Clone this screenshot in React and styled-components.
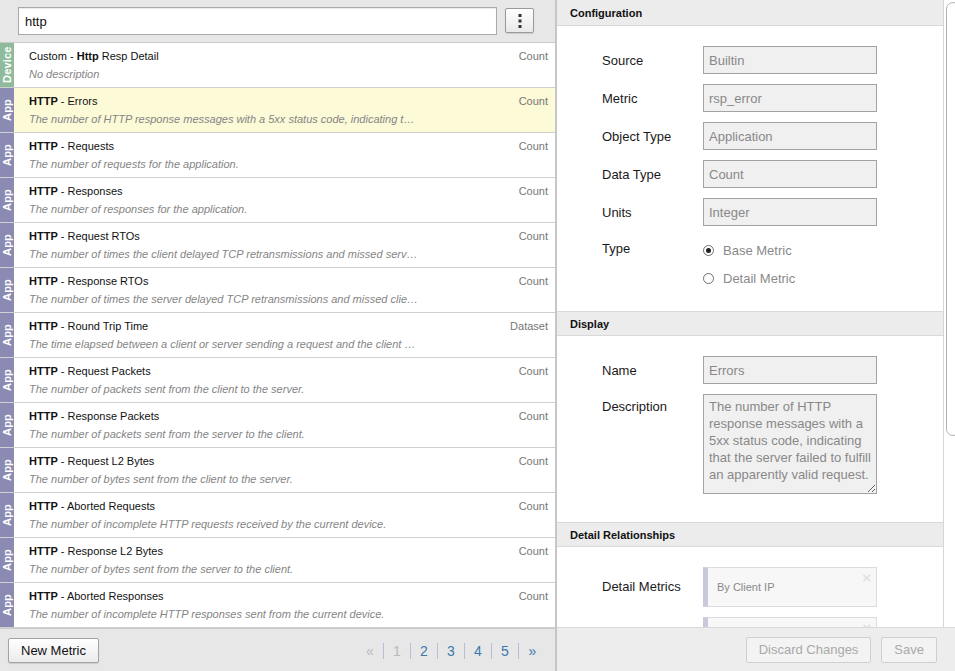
import React from 'react';
import styled, { createGlobalStyle } from 'styled-components';

const GlobalStyle = createGlobalStyle`
  html, body {
    margin: 0;
    padding: 0;
    height: 100%;
  }
  body {
    font-family: "Liberation Sans", Arial, sans-serif;
    color: #222;
    overflow: hidden;
  }
  * {
    box-sizing: border-box;
  }
`;

const Page = styled.div`
  display: flex;
  width: 955px;
  height: 671px;
  overflow: hidden;
  background: #fff;
`;

/* ---------- left side ---------- */

const LeftPane = styled.div`
  width: 557px;
  flex-shrink: 0;
  display: flex;
  flex-direction: column;
  border-right: 2px solid #c6c6c6;
`;

const SearchBar = styled.div`
  height: 43px;
  display: flex;
  align-items: flex-start;
  gap: 8px;
  padding: 7px 0 0 18px;
  background: #e7e7e7;
  border-bottom: 1px solid #c9c9c9;
`;

const SearchInput = styled.input`
  width: 479px;
  height: 28px;
  padding: 0 6px;
  border: 1px solid #a9a9a9;
  box-shadow: inset 0 1px 1px rgba(0, 0, 0, 0.08);
  font-family: inherit;
  font-size: 13px;
  color: #111;
  outline: none;
`;

const MenuButton = styled.button`
  width: 29px;
  height: 25px;
  margin-top: 1px;
  display: flex;
  align-items: center;
  justify-content: center;
  padding: 0;
  border: 1px solid #9a9a9a;
  border-radius: 2px;
  background: linear-gradient(#ffffff, #e9e9e9);
  box-shadow: 0 1px 1px rgba(0, 0, 0, 0.12);
`;

const List = styled.div`
  flex: 1;
  overflow: hidden;
  background: #fff;
`;

const Row = styled.div`
  display: flex;
  height: 45px;
  border-bottom: 1px solid #d0d0d0;
  background: ${(p) => (p.$active ? '#fcfad7' : '#fff')};
`;

const Tag = styled.div`
  width: 14px;
  flex-shrink: 0;
  display: flex;
  align-items: center;
  justify-content: center;
  background: ${(p) => (p.$kind === 'Device' ? '#8fbb9c' : '#8a8ab3')};
  color: #fff;
  font-size: 11px;
  font-weight: bold;
  writing-mode: vertical-rl;
  transform: rotate(180deg);
  letter-spacing: 0.2px;
`;

const RowBody = styled.div`
  flex: 1;
  min-width: 0;
  padding: 4px 7px 0 15px;
`;

const TitleLine = styled.div`
  display: flex;
  justify-content: space-between;
  font-size: 11px;
  line-height: 18px;
`;

const Title = styled.span`
  color: #111;
  b {
    font-weight: bold;
  }
`;

const Kind = styled.span`
  color: #777;
`;

const Desc = styled.div`
  max-width: 390px;
  font-size: 11px;
  line-height: 18px;
  font-style: italic;
  color: #858585;
  white-space: nowrap;
  overflow: hidden;
  text-overflow: ellipsis;
`;

const LeftFooter = styled.div`
  height: 43px;
  flex-shrink: 0;
  display: flex;
  align-items: center;
  justify-content: space-between;
  padding: 0 9px 0 8px;
  background: #e7e7e7;
  border-top: 1px solid #c9c9c9;
`;

const Button = styled.button`
  height: ${(p) => (p.$tall ? '26px' : '25px')};
  padding: 0 12px;
  font-family: inherit;
  font-size: 13px;
  color: ${(p) => (p.disabled ? '#a9a9a9' : '#111')};
  border: 1px solid ${(p) => (p.disabled ? '#cfcfcf' : '#a3a3a3')};
  border-radius: 2px;
  background: ${(p) => (p.disabled ? '#f3f3f3' : 'linear-gradient(#ffffff, #ebebeb)')};
  box-shadow: ${(p) => (p.disabled ? 'none' : '0 1px 1px rgba(0,0,0,0.12)')};
`;

const Pager = styled.div`
  display: flex;
  align-items: center;
  margin-top: 1px;
`;

const PageItem = styled.span`
  width: 27px;
  height: 16px;
  display: flex;
  align-items: center;
  justify-content: center;
  font-size: 14px;
  color: ${(p) => (p.$off ? '#b9b9b9' : '#3c78ad')};
  border-right: ${(p) => (p.$last ? 'none' : '1px solid #bbbad8')};
`;

/* ---------- right side ---------- */

const RightPane = styled.div`
  flex: 1;
  display: flex;
  flex-direction: column;
  min-width: 0;
`;

const ScrollArea = styled.div`
  flex: 1;
  display: flex;
  overflow: hidden;
`;

const Content = styled.div`
  flex: 1;
  border-right: 1px solid #d6d6d6;
`;

const Track = styled.div`
  width: 11px;
  flex-shrink: 0;
  overflow: hidden;
  padding: 2px 0 0 2px;
`;

const Thumb = styled.div`
  width: 14px;
  height: 434px;
  border: 1px solid #b3b3b3;
  border-radius: 7px;
  background: #fff;
`;

const SectionHead = styled.div`
  height: ${(p) => (p.$first ? '26px' : '25px')};
  display: flex;
  align-items: center;
  padding: ${(p) => (p.$first ? '1px 0 0 13px' : '0 0 0 13px')};
  background: #ececec;
  border-top: ${(p) => (p.$first ? 'none' : '1px solid #d9d9d9')};
  border-bottom: 1px solid #d9d9d9;
  font-size: 11px;
  font-weight: bold;
  color: #111;
`;

const Form = styled.div`
  display: flex;
  flex-direction: column;
  gap: 10px;
  padding: ${(p) => p.$pad || '20px 0 20px 45px'};
`;

const Field = styled.div`
  display: grid;
  grid-template-columns: 101px 174px;
  align-items: ${(p) => (p.$top ? 'start' : 'center')};
`;

const Label = styled.span`
  font-size: 13px;
  color: #1a1a1a;
  line-height: ${(p) => p.$line || 'normal'};
`;

const ReadOnly = styled.input`
  width: 174px;
  height: 28px;
  padding: 0 5px;
  border: 1px solid #a3a3a3;
  background: #f0f0f0;
  font-family: inherit;
  font-size: 13px;
  color: #888;
  outline: none;
`;

const Area = styled.textarea`
  width: 174px;
  height: 100px;
  padding: 3px 2px 3px 5px;
  border: 1px solid #a3a3a3;
  background: #f0f0f0;
  font-family: inherit;
  font-size: 13px;
  line-height: 17px;
  color: #888;
  outline: none;
  overflow: hidden;
`;

const Radios = styled.div`
  display: flex;
  flex-direction: column;
`;

const Radio = styled.div`
  height: 28px;
  display: flex;
  align-items: center;
  gap: 9px;
  font-size: 13px;
  color: #8a8a8a;
`;

const Dot = styled.span`
  width: 11px;
  height: 11px;
  border-radius: 50%;
  border: 1px solid #6f6f6f;
  background: #fff;
  display: flex;
  align-items: center;
  justify-content: center;
  &::after {
    content: '';
    width: 5px;
    height: 5px;
    border-radius: 50%;
    background: ${(p) => (p.$on ? '#222' : 'transparent')};
  }
`;

const Chips = styled.div`
  display: flex;
  flex-direction: column;
  gap: 10px;
`;

const Chip = styled.div`
  position: relative;
  height: 40px;
  display: flex;
  align-items: center;
  padding-left: 9px;
  border: 1px solid #dcdcdc;
  border-left: 5px solid #c9c9dc;
  background: #f7f7f7;
  font-size: 11px;
  color: #8a8a8a;
`;

const Close = styled.span`
  position: absolute;
  top: 1px;
  right: 5px;
  font-size: 15px;
  font-weight: bold;
  color: #e2e2e2;
`;

const RightFooter = styled.div`
  height: 44px;
  flex-shrink: 0;
  display: flex;
  align-items: center;
  justify-content: flex-end;
  gap: 10px;
  padding-right: 18px;
  background: #ededed;
  border-top: 1px solid #d9d9d9;
`;

const metrics = [
  { kind: 'Device', pre: 'Custom - ', hl: 'Http', name: ' Resp Detail', type: 'Count', desc: 'No description' },
  { kind: 'App', hl: 'HTTP', name: ' - Errors', type: 'Count', active: true, desc: 'The number of HTTP response messages with a 5xx status code, indicating that the server failed to fulfill an apparently valid request.' },
  { kind: 'App', hl: 'HTTP', name: ' - Requests', type: 'Count', desc: 'The number of requests for the application.' },
  { kind: 'App', hl: 'HTTP', name: ' - Responses', type: 'Count', desc: 'The number of responses for the application.' },
  { kind: 'App', hl: 'HTTP', name: ' - Request RTOs', type: 'Count', desc: 'The number of times the client delayed TCP retransmissions and missed server acknowledgements.' },
  { kind: 'App', hl: 'HTTP', name: ' - Response RTOs', type: 'Count', desc: 'The number of times the server delayed TCP retransmissions and missed client acknowledgements.' },
  { kind: 'App', hl: 'HTTP', name: ' - Round Trip Time', type: 'Dataset', desc: 'The time elapsed between a client or server sending a request and the client or server receiving an acknowledgement.' },
  { kind: 'App', hl: 'HTTP', name: ' - Request Packets', type: 'Count', desc: 'The number of packets sent from the client to the server.' },
  { kind: 'App', hl: 'HTTP', name: ' - Response Packets', type: 'Count', desc: 'The number of packets sent from the server to the client.' },
  { kind: 'App', hl: 'HTTP', name: ' - Request L2 Bytes', type: 'Count', desc: 'The number of bytes sent from the client to the server.' },
  { kind: 'App', hl: 'HTTP', name: ' - Aborted Requests', type: 'Count', desc: 'The number of incomplete HTTP requests received by the current device.' },
  { kind: 'App', hl: 'HTTP', name: ' - Response L2 Bytes', type: 'Count', desc: 'The number of bytes sent from the server to the client.' },
  { kind: 'App', hl: 'HTTP', name: ' - Aborted Responses', type: 'Count', desc: 'The number of incomplete HTTP responses sent from the current device.' },
];

const config = [
  ['Source', 'Builtin'],
  ['Metric', 'rsp_error'],
  ['Object Type', 'Application'],
  ['Data Type', 'Count'],
  ['Units', 'Integer'],
];

const pages = [
  { label: '«', off: true },
  { label: '1', off: true },
  { label: '2' },
  { label: '3' },
  { label: '4' },
  { label: '5' },
  { label: '»', last: true },
];

const Dots = () => (
  <svg width="4" height="14" viewBox="0 0 4 14">
    <rect x="0.5" y="0" width="3" height="3" fill="#333" />
    <rect x="0.5" y="5.5" width="3" height="3" fill="#333" />
    <rect x="0.5" y="11" width="3" height="3" fill="#333" />
  </svg>
);

const App = () => {
  return (
    <Page>
      <GlobalStyle />
      <LeftPane>
        <SearchBar>
          <SearchInput type="text" defaultValue="http" />
          <MenuButton type="button"><Dots /></MenuButton>
        </SearchBar>
        <List>
          {metrics.map((m, i) => (
            <Row key={i} $active={m.active}>
              <Tag $kind={m.kind}>{m.kind}</Tag>
              <RowBody>
                <TitleLine>
                  <Title>{m.pre}<b>{m.hl}</b>{m.name}</Title>
                  <Kind>{m.type}</Kind>
                </TitleLine>
                <Desc>{m.desc}</Desc>
              </RowBody>
            </Row>
          ))}
        </List>
        <LeftFooter>
          <Button type="button">New Metric</Button>
          <Pager>
            {pages.map((p) => (
              <PageItem key={p.label} $off={p.off} $last={p.last}>{p.label}</PageItem>
            ))}
          </Pager>
        </LeftFooter>
      </LeftPane>

      <RightPane>
        <ScrollArea>
          <Content>
            <SectionHead $first>Configuration</SectionHead>
            <Form $pad="20px 0 19px 45px">
              {config.map(([label, value]) => (
                <Field key={label}>
                  <Label>{label}</Label>
                  <ReadOnly readOnly value={value} />
                </Field>
              ))}
              <Field $top>
                <Label $line="26px">Type</Label>
                <Radios>
                  <Radio><Dot $on />Base Metric</Radio>
                  <Radio><Dot />Detail Metric</Radio>
                </Radios>
              </Field>
            </Form>

            <SectionHead>Display</SectionHead>
            <Form $pad="20px 0 28px 45px">
              <Field>
                <Label>Name</Label>
                <ReadOnly readOnly value="Errors" />
              </Field>
              <Field $top>
                <Label $line="26px">Description</Label>
                <Area
                  readOnly
                  value="The number of HTTP response messages with a 5xx status code, indicating that the server failed to fulfill an apparently valid request."
                />
              </Field>
            </Form>

            <SectionHead>Detail Relationships</SectionHead>
            <Form>
              <Field $top>
                <Label $line="40px">Detail Metrics</Label>
                <Chips>
                  <Chip>By Client IP<Close>×</Close></Chip>
                  <Chip>By Server IP<Close>×</Close></Chip>
                </Chips>
              </Field>
            </Form>
          </Content>
          <Track><Thumb /></Track>
        </ScrollArea>
        <RightFooter>
          <Button type="button" disabled $tall>Discard Changes</Button>
          <Button type="button" disabled $tall>Save</Button>
        </RightFooter>
      </RightPane>
    </Page>
  );
};

export default App;
